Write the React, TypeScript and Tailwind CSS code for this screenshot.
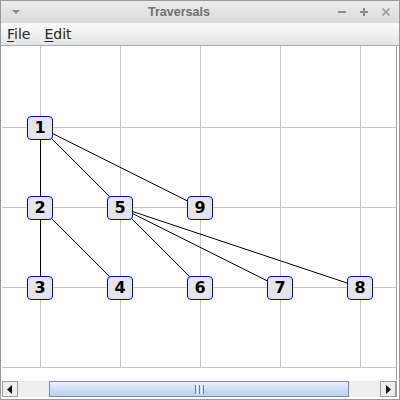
import React from "react";

type Node = { id: number; x: number; y: number };

// centres in page coordinates
const nodes: Node[] = [
    { id: 1, x: 40, y: 127 },
    { id: 2, x: 40, y: 207 },
    { id: 3, x: 40, y: 287 },
    { id: 4, x: 120, y: 287 },
    { id: 5, x: 120, y: 207 },
    { id: 6, x: 200, y: 287 },
    { id: 7, x: 280, y: 287 },
    { id: 8, x: 360, y: 287 },
    { id: 9, x: 200, y: 207 },
];

const edges: [number, number][] = [
    [1, 2],
    [1, 5],
    [1, 9],
    [2, 3],
    [2, 4],
    [5, 6],
    [5, 7],
    [5, 8],
];

const OX = 2;
const OY = 46;

function find(id: number) {
    return nodes.find((n) => n.id === id)!;
}

function TitleBar() {
    return (
        <div className="h-[22px] flex items-center px-[8px] bg-gradient-to-b from-[#ececec] to-[#dadada] rounded-t-[4px]">
            <svg width="14" height="10" viewBox="0 0 14 10">
                <path d="M3 3 L11 3 L7 7 Z" fill="#8a8a8a" />
            </svg>
            <span className="ml-[125px] text-[12.5px] font-bold text-[#707070] [font-family:'Liberation_Sans',sans-serif]">
                Traversals
            </span>
            <div className="ml-auto flex items-center gap-[12px]">
                <svg width="10" height="10" viewBox="0 0 10 10">
                    <path d="M1 5 H9" stroke="#8a8a8a" strokeWidth="2" />
                </svg>
                <svg width="10" height="10" viewBox="0 0 10 10">
                    <path d="M1 5 H9 M5 1 V9" stroke="#8a8a8a" strokeWidth="2" />
                </svg>
                <svg width="10" height="10" viewBox="0 0 10 10">
                    <path d="M1.5 1.5 L8.5 8.5 M8.5 1.5 L1.5 8.5" stroke="#9a9a9a" strokeWidth="1.6" />
                </svg>
            </div>
        </div>
    );
}

function MenuBar() {
    return (
        <div className="h-[23px] flex items-center gap-[14px] px-[6px] bg-gradient-to-b from-[#fafafa] to-[#e4e4e4] border-b border-[#a9adb3] text-[14px] text-[#262626] [font-family:'DejaVu_Sans',sans-serif]">
            <span>
                <span className="underline underline-offset-[2px]">F</span>ile
            </span>
            <span>
                <span className="underline underline-offset-[2px]">E</span>dit
            </span>
        </div>
    );
}

function Canvas() {
    const gx = [40, 120, 200, 280, 360];
    const gy = [127, 207, 287, 367];
    return (
        <div className="relative flex-1 bg-white border-r border-[#9aa0a8]">
            <svg className="absolute inset-0" width="394" height="336">
                {gx.map((x) => (
                    <line key={"v" + x} x1={x - OX + 0.5} y1={0} x2={x - OX + 0.5} y2={367 - OY} stroke="#c4c4c4" />
                ))}
                {gy.map((y) => (
                    <line key={"h" + y} x1={0} y1={y - OY + 0.5} x2={394} y2={y - OY + 0.5} stroke="#c4c4c4" />
                ))}
                {edges.map(([a, b]) => {
                    const na = find(a);
                    const nb = find(b);
                    return (
                        <line
                            key={a + "-" + b}
                            x1={na.x - OX + 0.5}
                            y1={na.y - OY + 0.5}
                            x2={nb.x - OX + 0.5}
                            y2={nb.y - OY + 0.5}
                            stroke="#000"
                            strokeWidth="1"
                        />
                    );
                })}
            </svg>
            {nodes.map((n) => (
                <div
                    key={n.id}
                    className="absolute w-[26px] h-[24px] flex items-center justify-center rounded-[4px] border border-[#0000ff] bg-[#e6e6e6] text-[16px] font-bold text-black [font-family:'DejaVu_Sans',sans-serif] leading-none"
                    style={{ left: n.x - OX - 13, top: n.y - OY - 11 }}
                >
                    {n.id}
                </div>
            ))}
        </div>
    );
}

function ScrollBar() {
    return (
        <div className="h-[16px] flex bg-[#eeeeee] border-r border-[#9aa0a8]">
            <div className="w-[16px] h-full flex items-center justify-center border border-[#9c9c9c] bg-[#eeeeee]">
                <svg width="6" height="9" viewBox="0 0 6 9">
                    <path d="M5 0 L0 4.5 L5 9 Z" fill="#111" />
                </svg>
            </div>
            <div className="flex-1 flex pl-[31px] pr-[31px]">
                <div className="flex-1 flex items-center justify-center border border-[#6a8ccc] bg-gradient-to-b from-[#eef3fa] via-[#d0def0] to-[#bcd1e8]">
                    <div className="flex gap-[1px]">
                        <div className="w-[1px] h-[9px] bg-[#5e7fb8]" />
                        <div className="w-[1px] h-[9px] bg-[#fff]" />
                        <div className="w-[1px] h-[9px] bg-[#5e7fb8]" />
                        <div className="w-[1px] h-[9px] bg-[#fff]" />
                        <div className="w-[1px] h-[9px] bg-[#5e7fb8]" />
                    </div>
                </div>
            </div>
            <div className="w-[16px] h-full flex items-center justify-center border border-[#9c9c9c] bg-[#eeeeee]">
                <svg width="6" height="9" viewBox="0 0 6 9">
                    <path d="M1 0 L6 4.5 L1 9 Z" fill="#111" />
                </svg>
            </div>
        </div>
    );
}

export default function App() {
    return (
        <div className="w-[400px] h-[400px] flex flex-col bg-[#f4f4f4] border border-[#9a9a9a] overflow-hidden">
            <TitleBar />
            <MenuBar />
            <div className="flex-1 flex flex-col pl-[1px] pr-[2px] pb-[2px] bg-white">
                <Canvas />
                <div className="h-[1px]" />
                <ScrollBar />
            </div>
        </div>
    );
}
